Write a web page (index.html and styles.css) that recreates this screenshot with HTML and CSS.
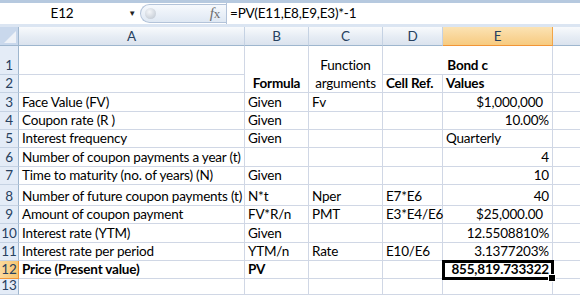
FILE: index.html
```html
<!DOCTYPE html>
<html lang="en">
<head>
    <meta charset="UTF-8">
    <title>Bond price</title>
    <link rel="stylesheet" href="styles.css">
</head>
<body>
    <div class="formula-bar">
        <div class="name-box">E12</div>
        <div class="name-drop">&#9660;</div>
        <div class="fx-pill">
            <span class="knob"></span>
            <span class="fx"><i>f</i>x</span>
        </div>
        <div class="formula">=PV(E11,E8,E9,E3)*-1</div>
    </div>

    <div class="sheet">
        <!-- column headers -->
        <div class="corner">
            <svg width="19" height="19" viewBox="0 0 19 19"><polygon points="16,4 16,16 4,16" fill="#eef2f8"/></svg>
        </div>
        <div class="col-head">A</div>
        <div class="col-head">B</div>
        <div class="col-head">C</div>
        <div class="col-head">D</div>
        <div class="col-head active">E</div>
        <div class="col-head last"></div>

        <!-- rows 1-2 -->
        <div class="row-head r1">1</div>
        <div class="cell"></div>
        <div class="cell bold center bottom span2">Formula</div>
        <div class="cell center bottom span2 wrap">Function<br>arguments</div>
        <div class="cell bold center bottom merge-de">Bond c</div>
        <div class="cell last"></div>

        <div class="row-head">2</div>
        <div class="cell"></div>
        <div class="cell bold">Cell Ref.</div>
        <div class="cell bold">Values</div>
        <div class="cell last"></div>

        <div class="row-head">3</div>
        <div class="cell">Face Value (FV)</div>
        <div class="cell">Given</div>
        <div class="cell">Fv</div>
        <div class="cell"></div>
        <div class="cell right acct">$1,000,000</div>
        <div class="cell last"></div>

        <div class="row-head">4</div>
        <div class="cell">Coupon rate (R )</div>
        <div class="cell">Given</div>
        <div class="cell"></div>
        <div class="cell"></div>
        <div class="cell right">10.00%</div>
        <div class="cell last"></div>

        <div class="row-head">5</div>
        <div class="cell">Interest frequency</div>
        <div class="cell">Given</div>
        <div class="cell"></div>
        <div class="cell"></div>
        <div class="cell">Quarterly</div>
        <div class="cell last"></div>

        <div class="row-head">6</div>
        <div class="cell">Number of coupon payments a year (t)</div>
        <div class="cell"></div>
        <div class="cell"></div>
        <div class="cell"></div>
        <div class="cell right">4</div>
        <div class="cell last"></div>

        <div class="row-head">7</div>
        <div class="cell">Time to maturity (no. of years) (N)</div>
        <div class="cell">Given</div>
        <div class="cell"></div>
        <div class="cell"></div>
        <div class="cell right">10</div>
        <div class="cell last"></div>

        <div class="row-head">8</div>
        <div class="cell">Number of future coupon payments (t)</div>
        <div class="cell">N*t</div>
        <div class="cell">Nper</div>
        <div class="cell">E7*E6</div>
        <div class="cell right">40</div>
        <div class="cell last"></div>

        <div class="row-head">9</div>
        <div class="cell">Amount of coupon payment</div>
        <div class="cell">FV*R/n</div>
        <div class="cell">PMT</div>
        <div class="cell">E3*E4/E6</div>
        <div class="cell right acct">$25,000.00</div>
        <div class="cell last"></div>

        <div class="row-head">10</div>
        <div class="cell">Interest rate (YTM)</div>
        <div class="cell">Given</div>
        <div class="cell"></div>
        <div class="cell"></div>
        <div class="cell right">12.5508810%</div>
        <div class="cell last"></div>

        <div class="row-head">11</div>
        <div class="cell">Interest rate per period</div>
        <div class="cell">YTM/n</div>
        <div class="cell">Rate</div>
        <div class="cell">E10/E6</div>
        <div class="cell right">3.1377203%</div>
        <div class="cell last"></div>

        <div class="row-head active">12</div>
        <div class="cell bold">Price (Present value)</div>
        <div class="cell bold">PV</div>
        <div class="cell"></div>
        <div class="cell"></div>
        <div class="cell right bold selected">855,819.733322</div>
        <div class="cell last"></div>

        <div class="row-head">13</div>
        <div class="cell"></div>
        <div class="cell"></div>
        <div class="cell"></div>
        <div class="cell"></div>
        <div class="cell"></div>
        <div class="cell last"></div>
    </div>
</body>
</html>
```
FILE: styles.css
```css
* {
    box-sizing: border-box;
    margin: 0;
    padding: 0;
}

body {
    font-family: Lato, 'Liberation Sans', sans-serif;
    font-size: 13.5px;
    letter-spacing: -0.2px;
    color: #000;
    background: #fff;
    width: 580px;
    height: 295px;
    overflow: hidden;
}

/* formula bar */

.formula-bar {
    display: flex;
    height: 27px;
    border-top: 3px solid #b6c9df;
    border-bottom: 3px solid #dbe5f2;
    background: #fff;
    align-items: stretch;
}

.name-box {
    width: 124px;
    text-align: center;
    line-height: 20px;
    color: #000;
}

.name-drop {
    width: 16px;
    font-size: 8px;
    line-height: 21px;
    color: #222;
    text-align: center;
}

.fx-pill {
    width: 86px;
    display: flex;
    align-items: center;
    justify-content: space-between;
    padding: 0 6px 0 4px;
    margin: 1px 0;
    border: 1px solid #b3c3d9;
    border-right: none;
    border-radius: 10px 0 0 10px;
    background: linear-gradient(#f6f9fd, #dfe8f3);
}

.knob {
    width: 11px;
    height: 11px;
    border-radius: 50%;
    background: radial-gradient(circle at 40% 35%, #f4f6f9, #b9c2cd);
}

.fx {
    font-family: 'Liberation Serif', serif;
    font-size: 13px;
    color: #6c6c6c;
}

.fx i {
    font-size: 15px;
}

.formula {
    flex: 1;
    border-left: 1px solid #b3c3d9;
    padding-left: 3px;
    line-height: 20px;
}

/* sheet grid */

.sheet {
    display: grid;
    grid-template-columns: 19px 226px 64px 74px 60px 110px 1fr;
    grid-template-rows: 19px 29px 18px 19px 18px 18px 19px 18px 21px 18px 19px 18px 18px 16px;
}

.corner {
    background: #c9d8ec;
    border-right: 1px solid #9eb6ce;
    border-bottom: 1px solid #9eb6ce;
}

.corner svg {
    display: block;
}

.col-head {
    background: linear-gradient(#f8fafc, #e6ecf4 55%, #dbe3ee);
    border-right: 1px solid #c5d2e3;
    border-bottom: 1px solid #9eb6ce;
    color: #27415f;
    text-align: center;
    line-height: 18px;
}

.col-head.active {
    background: linear-gradient(#fbe3b4, #f9d69a 50%, #f7cb80);
    border-color: #f2a548;
    border-bottom-color: #f29536;
}

.col-head.last {
    border-right: none;
}

.row-head {
    background: #e4ecf7;
    border-right: 1px solid #9eb6ce;
    border-bottom: 1px solid #c5d2e3;
    color: #27415f;
    text-align: center;
    display: flex;
    align-items: flex-end;
    justify-content: center;
    line-height: 17px;
}

.row-head.r1 {
    grid-row: 2;
}

.row-head.active {
    background: linear-gradient(90deg, #fbd99c, #f8c772);
    border-bottom-color: #f29536;
    border-right-color: #f29536;
}

.cell {
    border-right: 1px solid #d0d7e5;
    border-bottom: 1px solid #d0d7e5;
    padding: 0 3px;
    white-space: nowrap;
    overflow: visible;
    display: flex;
    align-items: flex-end;
    line-height: 17px;
}

.cell.last {
    border-right: none;
}

.bold {
    font-weight: bold;
}

.center {
    justify-content: center;
    text-align: center;
}

.right {
    justify-content: flex-end;
}

.acct {
    padding-right: 9px;
}

.span2 {
    grid-row: span 2;
}

.wrap {
    white-space: normal;
    line-height: 18px;
}

.merge-de {
    grid-column: span 2;
}

.selected {
    position: relative;
    outline: 3px solid #000;
    outline-offset: -2px;
    z-index: 1;
}

.selected::after {
    content: '';
    position: absolute;
    right: -4px;
    bottom: -4px;
    width: 6px;
    height: 6px;
    background: #000;
    border: 1px solid #fff;
}
```
